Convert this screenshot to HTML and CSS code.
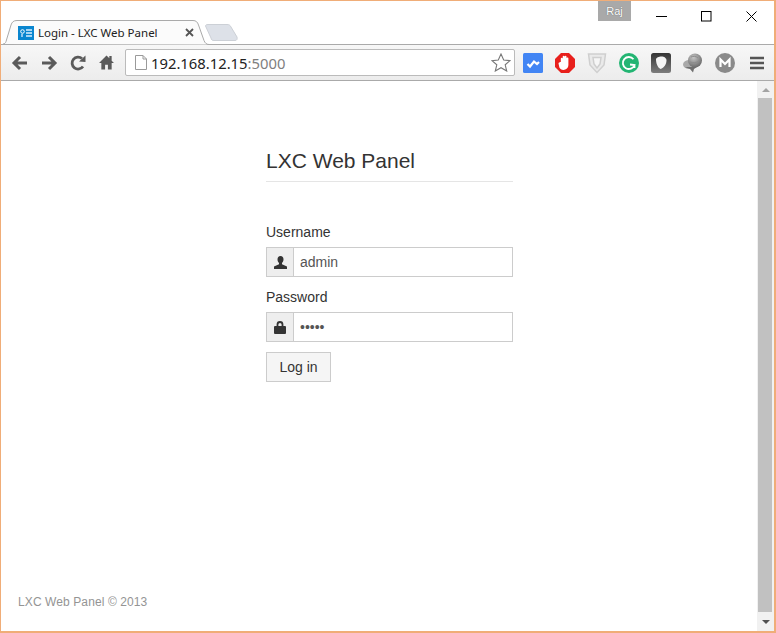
FILE: index.html
```html
<!DOCTYPE html>
<html lang="en">
<head>
    <meta charset="UTF-8">
    <meta name="viewport" content="width=device-width, initial-scale=1.0">
    <title>Login - LXC Web Panel</title>
    <link rel="stylesheet" href="styles.css">
</head>
<body>

    <div class="window">

        <!-- Title bar with the tabs -->
        <div class="titlebar">
            <div class="tabs">
                <div class="tab">
                    <svg class="tab-shape" width="206" height="25" viewBox="0 0 206 25">
                        <path d="M0 24C1.500 24 2.500 23 3 21.500L8 5C9 2 10.500 .5 14 .5H190C193 .5 194.500 2 195.500 5L201 20.500C202 23 203.500 24.500 206 24.500" fill="#fbfbfb" stroke="#aaa"/>
                    </svg>
                    <svg class="favicon" width="16" height="14" viewBox="0 0 16 14">
                        <rect width="16" height="14" fill="#0a86cf"/>
                        <circle cx="4.500" cy="5.500" r="1.800" fill="none" stroke="#fff"/>
                        <path d="M4 8v3M8 4h6M8 7h6M8 10h6" stroke="#dcefff" stroke-width="1.300"/>
                    </svg>
                    <span class="tab-title">Login - LXC Web Panel</span>
                    <svg class="tab-close" width="9" height="9" viewBox="0 0 9 9">
                        <path d="M1 1l7 7M8 1l-7 7" stroke="#555" stroke-width="1.800"/>
                    </svg>
                </div>
                <svg class="new-tab" width="33" height="17" viewBox="0 0 33 17">
                    <path d="M.5 2C.5 1 1.500 .5 3 .5H22C24 .5 25 1 26 3L32 13C32.500 15 32 16.500 30 16.500H9C7 16.500 6.500 16 6 14Z" fill="#dde1e8" stroke="#ccd0d6"/>
                </svg>
            </div>
            <div class="profile">Raj</div>
            <div class="win-btn">
                <svg width="11" height="11" viewBox="0 0 11 11"><path d="M0 5.500H11" stroke="#000"/></svg>
            </div>
            <div class="win-btn">
                <svg width="11" height="11" viewBox="0 0 11 11"><rect x=".5" y=".5" width="9.500" height="9.500" fill="none" stroke="#000"/></svg>
            </div>
            <div class="win-btn">
                <svg width="11" height="11" viewBox="0 0 11 11"><path d="M.5 .5l10 10M10.500 .5l-10 10" stroke="#000"/></svg>
            </div>
        </div>

        <!-- Browser toolbar -->
        <div class="toolbar">
            <div class="nav-btn">
                <svg width="18" height="16" viewBox="0 0 18 16"><path d="M16 8H3M9 2L3 8l6 6" fill="none" stroke="#5a5a5a" stroke-width="3"/></svg>
            </div>
            <div class="nav-btn">
                <svg width="18" height="16" viewBox="0 0 18 16"><path d="M2 8h13M9 2l6 6-6 6" fill="none" stroke="#5a5a5a" stroke-width="3"/></svg>
            </div>
            <div class="nav-btn">
                <svg width="16" height="16" viewBox="0 0 16 16"><path d="M13 11.500A6 6 0 1 1 12 3.500" fill="none" stroke="#5a5a5a" stroke-width="2.800"/><path d="M9 6.500L15.500 7V.5Z" fill="#5a5a5a"/></svg>
            </div>
            <div class="nav-btn">
                <svg width="15" height="15" viewBox="0 0 16 15"><path d="M8 0L0 8h2.500v7H6.500v-5h3v5h4V8H16L13.500 5.500V.5H11v2.500Z" fill="#5a5a5a"/></svg>
            </div>

            <div class="address">
                <svg class="page-icon" width="12" height="15" viewBox="0 0 12 15"><path d="M.5 .5H8L11.500 4V14.500H.5ZM8 .5V4H11.500" fill="#fff" stroke="#9a9a9a"/></svg>
                <span class="host">192.168.12.15</span><span class="port">:5000</span>
                <svg class="star" width="20" height="19" viewBox="0 0 20 19"><path d="M10 1l2.700 6 6.300 .6-4.800 4.200 1.500 6.200L10 14.700 4.300 18l1.500-6.200L1 7.600 7.300 7Z" fill="#fff" stroke="#777" stroke-width="1.100"/></svg>
            </div>

            <div class="ext">
                <svg width="20" height="20" viewBox="0 0 20 20"><rect width="20" height="20" rx="1.500" fill="#4285f4"/><path d="M4.500 11l2.500 2.500L11 8.500l3 2.500 2-2" fill="none" stroke="#fff" stroke-width="2.200"/></svg>
            </div>
            <div class="ext">
                <svg width="20" height="20" viewBox="0 0 20 20"><path d="M6 0h8l6 6v8l-6 6H6l-6-6V6Z" fill="#e8201c"/><path d="M5.800 9V5.500a1 1 0 0 1 1.900 0V3.500a1 1 0 0 1 1.900 0 1 1 0 0 1 1.900 0V5a1 1 0 0 1 1.900 .5V12a5 5 0 0 1-5 5c-2 0-3.200-1-4-2.500L3.500 10.500C3.500 9.500 5 9 5.800 9Z" fill="#fff"/></svg>
            </div>
            <div class="ext">
                <svg width="20" height="22" viewBox="0 0 20 22"><path d="M1.500 2H18.500L17 13 10 20.500 3 13Z" fill="#eaeaea" stroke="#cfcfcf" stroke-width="1.500"/><path d="M6 5.500H14L13 12 10 16 7 12Z" fill="#f6f6f6" stroke="#cfcfcf" stroke-width="1.500"/></svg>
            </div>
            <div class="ext">
                <svg width="20" height="20" viewBox="0 0 20 20"><circle cx="10" cy="10" r="10" fill="#23b573"/><path d="M14.500 6.200A6 6 0 1 0 15.500 12L11 11.500M15.500 11.500V15" fill="none" stroke="#fff" stroke-width="1.800"/></svg>
            </div>
            <div class="ext">
                <svg width="20" height="20" viewBox="0 0 20 20">
                    <defs><linearGradient id="darkbox" x1="0" y1="0" x2="0" y2="1"><stop offset="0" stop-color="#343434"/><stop offset="1" stop-color="#7d7d7d"/></linearGradient></defs>
                    <rect width="20" height="20" rx="2.500" fill="url(#darkbox)"/>
                    <path d="M5 6.500C5 4.500 8 3.500 10.500 3.500 13 3.500 15.500 5 15.500 7.500 15.500 11 13 15 9.500 16 6.500 14.500 5 10 5 6.500Z" fill="#f4f4f4"/>
                </svg>
            </div>
            <div class="ext">
                <svg width="20" height="20" viewBox="0 0 20 20">
                    <defs><radialGradient id="globe" cx=".4" cy=".3" r=".8"><stop offset="0" stop-color="#c4c4c4"/><stop offset="1" stop-color="#5f5f5f"/></radialGradient></defs>
                    <ellipse cx="6.500" cy="11.500" rx="6.500" ry="4.500" fill="#a9a9a9"/>
                    <path d="M2 14h12l-3 2-1 3.500-3-3.500Z" fill="#6f6f6f"/>
                    <circle cx="12" cy="7.500" r="7" fill="url(#globe)"/>
                    <path d="M8 4c2-1 5-1 7 1M7 9c3 1 6 1 9-1" fill="none" stroke="#8c8c8c"/>
                </svg>
            </div>
            <div class="ext">
                <svg width="20" height="20" viewBox="0 0 20 20"><circle cx="10" cy="10" r="10" fill="#8a8a8a"/><path d="M5.500 14V6.500L10 11l4.500-4.500V14" fill="none" stroke="#fff" stroke-width="2.200"/></svg>
            </div>
            <div class="ext">
                <svg width="14" height="14" viewBox="0 0 14 14"><path d="M0 2h14M0 7h14M0 12h14" stroke="#555" stroke-width="2.600"/></svg>
            </div>
        </div>

        <!-- Page and scrollbar -->
        <div class="viewport">
            <div class="page">
                <div class="login">
                    <h1>LXC Web Panel</h1>
                    <form>
                        <label for="username">Username</label>
                        <div class="input-group">
                            <span class="addon">
                                <svg width="13" height="13" viewBox="0 0 13 13"><path d="M6.500 0C8.500 0 9.500 1.500 9.500 3.500 9.500 5 8.800 6.300 8 7v1.200L13 10.500V13H0V10.500L5 8.200V7C4.200 6.300 3.500 5 3.500 3.500 3.500 1.500 4.500 0 6.500 0Z" fill="#333"/></svg>
                            </span>
                            <input id="username" type="text" value="admin">
                        </div>
                        <label for="password">Password</label>
                        <div class="input-group">
                            <span class="addon">
                                <svg width="12" height="13" viewBox="0 0 12 13"><path d="M3.500 6V3.500a2.500 2.500 0 0 1 5 0V6" fill="none" stroke="#333" stroke-width="1.800"/><rect y="5" width="12" height="8" rx="1" fill="#333"/></svg>
                            </span>
                            <input id="password" type="password" value="admin">
                        </div>
                        <button type="button" class="btn">Log in</button>
                    </form>
                </div>
                <footer class="footer">LXC Web Panel © 2013</footer>
            </div>
            <div class="scrollbar">
                <div class="arrow"><span class="arrow-up"></span></div>
                <div class="thumb"></div>
                <div class="arrow arrow-bottom"><span class="arrow-down"></span></div>
            </div>
        </div>

    </div>

</body>
</html>
```

FILE: styles.css
```css
* {
    box-sizing: border-box;
}
html, body {
    margin: 0;
    padding: 0;
    height: 100%;
    overflow: hidden;
}
body {
    font-family: "Liberation Sans", Arial, sans-serif;
    font-size: 14px;
    color: #333;
    background-color: #fff;
}
.window {
    display: flex;
    flex-direction: column;
    height: 633px;
    border-style: solid;
    border-color: #f0ad78;
    border-width: 1px 2px 2px 1px;
}

/* Title bar */
.titlebar {
    display: flex;
    flex: none;
    height: 43px;
    background-color: #fff;
}
.tabs {
    display: flex;
    align-self: flex-end;
    align-items: flex-start;
    margin-left: 2px;
    margin-right: auto;
    margin-bottom: -1px;
    position: relative;
    z-index: 1;
}
.tab {
    position: relative;
    z-index: 1;
    display: flex;
    align-items: center;
    width: 206px;
    height: 25px;
    padding-left: 15px;
}
.tab-shape {
    position: absolute;
    left: 0;
    top: 0;
}
.favicon,
.tab-title,
.tab-close {
    position: relative;
}
.tab-title {
    margin-left: 4px;
    font-family: "Noto Sans", sans-serif;
    font-size: 11.5px;
    color: #222;
    white-space: nowrap;
}
.tab-close {
    margin-left: auto;
    margin-right: 15px;
}
.new-tab {
    margin-left: -4px;
    margin-top: 4px;
}
.profile {
    width: 33px;
    height: 20px;
    margin-right: 8px;
    background-color: #a9a9a9;
    color: #fff;
    font-size: 11px;
    line-height: 20px;
    text-align: center;
    text-shadow: 0 0 1px #555;
}
.win-btn {
    display: flex;
    align-items: center;
    justify-content: center;
    width: 45px;
    height: 30px;
}

/* Toolbar */
.toolbar {
    display: flex;
    flex: none;
    align-items: center;
    height: 37px;
    padding-left: 4px;
    border-top: 1px solid #aaa;
    border-bottom: 1px solid #aaa;
    background: linear-gradient(#f7f7f7, #ececec);
}
.nav-btn {
    display: flex;
    align-items: center;
    justify-content: center;
    width: 29px;
    height: 28px;
}
.address {
    display: flex;
    align-items: center;
    width: 390px;
    height: 27px;
    margin-left: 4px;
    margin-right: 2px;
    padding-left: 9px;
    padding-right: 3px;
    border: 1px solid #bbb;
    border-radius: 2px;
    background-color: #fff;
    font-family: "Noto Sans", sans-serif;
    font-size: 14.8px;
}
.page-icon {
    margin-right: 4px;
}
.host {
    color: #222;
}
.port {
    color: #808080;
}
.star {
    margin-left: auto;
}
.ext {
    display: flex;
    flex: none;
    align-items: center;
    justify-content: center;
    width: 32px;
    height: 28px;
}

/* Page */
.viewport {
    display: flex;
    flex: 1;
    min-height: 0;
}
.page {
    display: flex;
    flex: 1;
    flex-direction: column;
    background-color: #fff;
}
.login {
    width: 247px;
    margin-left: 265px;
    margin-top: 68px;
}
h1 {
    margin: 0 0 40px;
    padding-bottom: 9px;
    border-bottom: 1px solid #e5e5e5;
    font-size: 21px;
    font-weight: normal;
    line-height: 23px;
}
label {
    display: block;
    margin-bottom: 5px;
    line-height: 20px;
}
.input-group {
    display: flex;
    height: 30px;
    margin-bottom: 10px;
    border: 1px solid #ccc;
}
.addon {
    display: flex;
    flex: none;
    align-items: center;
    justify-content: center;
    width: 27px;
    border-right: 1px solid #ccc;
    background-color: #eee;
}
.input-group input {
    flex: 1;
    min-width: 0;
    padding: 0 6px;
    border: none;
    outline: none;
    font-family: inherit;
    font-size: 14px;
    color: #555;
}
.btn {
    display: block;
    width: 65px;
    height: 30px;
    padding: 0;
    border: 1px solid #ccc;
    background-color: #f5f5f5;
    font-family: inherit;
    font-size: 14px;
    color: #333;
}
.footer {
    margin-top: auto;
    padding-left: 17px;
    padding-bottom: 21px;
    font-size: 12px;
    line-height: 16px;
    letter-spacing: .1px;
    color: #949494;
}

/* Scrollbar */
.scrollbar {
    display: flex;
    flex: none;
    flex-direction: column;
    width: 17px;
    background-color: #f1f1f1;
}
.arrow {
    display: flex;
    flex: none;
    align-items: center;
    justify-content: center;
    height: 17px;
}
.arrow-bottom {
    height: 19px;
}
.arrow-up,
.arrow-down {
    width: 0;
    height: 0;
    border-left: 4px solid transparent;
    border-right: 4px solid transparent;
}
.arrow-up {
    border-bottom: 4px solid #a3a3a3;
}
.arrow-down {
    border-top: 4px solid #505050;
}
.thumb {
    flex: 1;
    margin: 0 2px 0 1px;
    background-color: #c1c1c1;
}
```
